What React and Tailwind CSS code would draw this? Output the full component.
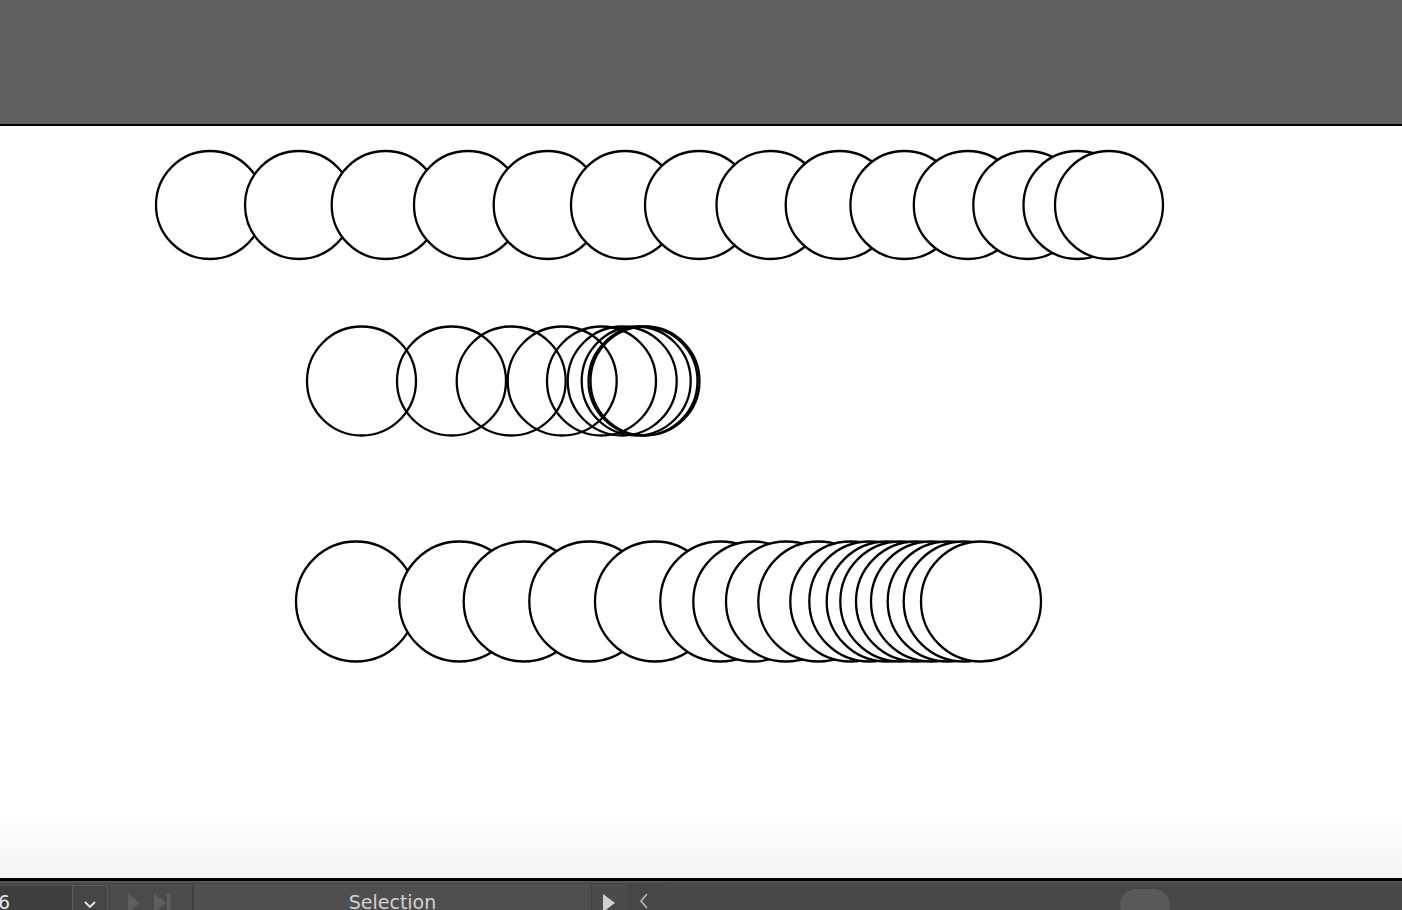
import React from "react";

const row1 = [210, 299, 385.7, 468, 547.7, 625, 699, 770.5, 839.7, 904.4, 967.8, 1027.3, 1077.5, 1109];
const row2 = [361.5, 451.5, 511.2, 562.2, 601.5, 622.2, 636.2, 643, 645];
const row3 = [356, 459.3, 523.7, 589.3, 655, 720.3, 753.3, 786, 818.3, 850.3, 869.3, 886.7, 900.3, 916, 931, 947.7, 963.7, 981];

export default function App() {
  return (
    <div className="flex h-[910px] w-[1402px] flex-col overflow-hidden bg-[#474747]" style={{ fontFamily: '"DejaVu Sans", "Noto Sans", sans-serif' }}>
      <div className="h-[124px] shrink-0 bg-[#616161]" />
      <div className="h-[2px] shrink-0 bg-black" />
      <div className="h-[752px] shrink-0 bg-[linear-gradient(to_bottom,#ffffff_91%,#f4f4f4)]">
        <svg width="1402" height="752" viewBox="0 0 1402 752" className="block">
          {row1.map((cx, i) => (
            <circle key={"a" + i} cx={cx} cy={79} r={54} fill="#fff" stroke="#000" strokeWidth={2.3} />
          ))}
          {row2.map((cx, i) => (
            <circle key={"b" + i} cx={cx} cy={255} r={54.5} fill="none" stroke="#000" strokeWidth={2.3} />
          ))}
          {row3.map((cx, i) => (
            <circle key={"c" + i} cx={cx} cy={475.5} r={60} fill="#fff" stroke="#000" strokeWidth={2.3} />
          ))}
        </svg>
      </div>
      <div className="h-[3px] shrink-0 bg-black" />
      <div className="h-[2px] shrink-0 bg-[#545454]" />
      <div className="flex h-[40px] shrink-0 items-stretch bg-[#474747] pt-[2px]">
        <div className="flex w-[72px] items-start border-t border-[#4f4f4f] bg-[#3e3e3e] pt-[7px] text-[19px] leading-none text-[#e6e6e6]">
          <span className="-ml-[2px]">6</span>
        </div>
        <div className="flex w-[36px] items-start justify-center rounded-tr-[4px] border-l border-t border-r border-[#5a5a5a] bg-[#454545] pt-[14px]">
          <svg width="14" height="9" viewBox="0 0 14 9">
            <path d="M2 2 L7 7 L12 2" fill="none" stroke="#e8e8e8" strokeWidth="1.8" />
          </svg>
        </div>
        <div className="ml-[2px] flex w-[82px] items-start gap-[12px] border-t border-[#555] bg-[#4b4b4b] pl-[17px] pt-[7px]">
          <svg width="14" height="20" viewBox="0 0 14 20">
            <path d="M1 1 L13 10 L1 19 Z" fill="#5f5f5f" />
          </svg>
          <svg width="20" height="20" viewBox="0 0 20 20">
            <path d="M1 1 L13 10 L1 19 Z" fill="#5f5f5f" />
            <rect x="14" y="1" width="3.5" height="18" fill="#5f5f5f" />
          </svg>
        </div>
        <div className="w-[2px] bg-[#3f3f3f]" />
        <div className="flex w-[397px] items-start justify-center border-t border-[#575757] bg-[#4f4f4f] pt-[7px] text-[19px] leading-none text-[#d2d2d2]">
          <span>Selection</span>
        </div>
        <div className="w-[1px] bg-[#424242]" />
        <div className="flex w-[34px] items-start justify-center border-t border-[#555] bg-[#4a4a4a] pt-[7px]">
          <svg width="14" height="20" viewBox="0 0 14 20">
            <path d="M1 1 L13 10 L1 19 Z" fill="#cfcfcf" />
          </svg>
        </div>
        <div className="flex w-[40px] items-start pl-[13px] pt-[8px]">
          <svg width="10" height="16" viewBox="0 0 10 16">
            <path d="M8 1 L2 8 L8 15" fill="none" stroke="#b8b8b8" strokeWidth="1.6" />
          </svg>
        </div>
        <div className="relative flex-1 border-t border-[#525252] bg-[#474747]">
          <div className="absolute left-[454px] top-[3px] h-[32px] w-[50px] rounded-[16px] bg-[#595959]" />
        </div>
      </div>
    </div>
  );
}
